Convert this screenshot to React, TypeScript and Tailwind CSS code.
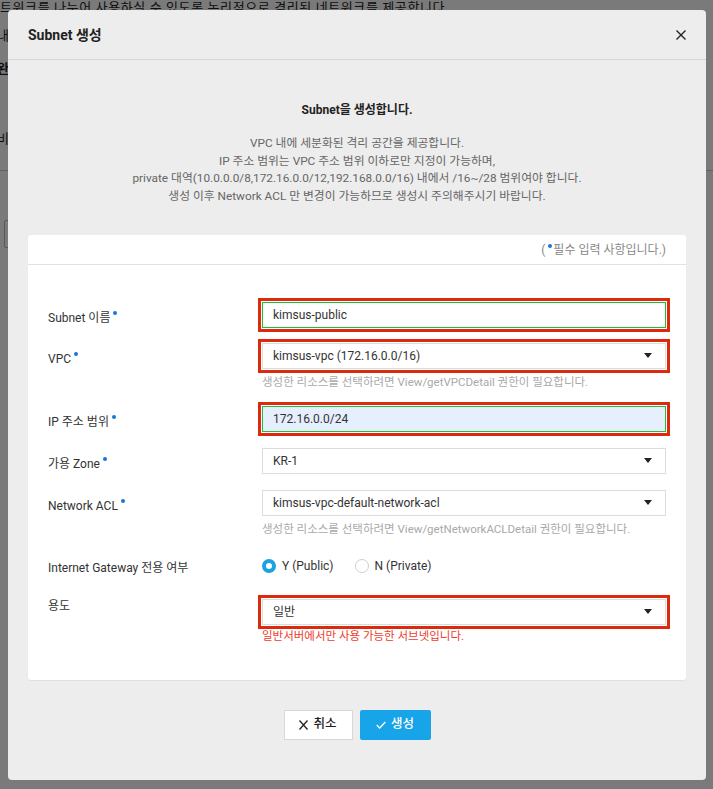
import React from 'react';

const font = "font-['Roboto','Noto_Sans_CJK_KR',sans-serif]";

const Dot = () => (
    <span className="ml-[3px] mb-[9px] inline-block h-[4px] w-[4px] rounded-full bg-[#1c74d9]" />
);

const Caret = () => (
    <svg width="8" height="5" viewBox="0 0 8 5" className="shrink-0">
        <polygon points="0,0 8,0 4,5" fill="#222" />
    </svg>
);

interface RowProps {
    label: string;
    required?: boolean;
    raised?: boolean;
    className?: string;
    children: React.ReactNode;
}

// 한 줄: 왼쪽 라벨, 오른쪽 입력 영역
const Row: React.FC<RowProps> = ({ label, required, raised, className = '', children }) => (
    <div className={`flex items-start ${className}`}>
        <div
            className={`flex w-[214px] shrink-0 items-center text-[12px] text-[#333] ${
                raised ? 'h-[14px]' : 'h-[26px] pt-[6px]'
            }`}
        >
            {label}
            {required && <Dot />}
        </div>
        <div className="w-[404px]">{children}</div>
    </div>
);

const Select: React.FC<{ value: string; marked?: boolean }> = ({ value, marked }) => (
    <div
        className={`flex h-[26px] items-center justify-between border border-[#dcdcdc] bg-white pl-[10px] pr-[13px] text-[12px] text-[#333] ${
            marked ? 'outline-[3px] outline-solid outline-[#dc2a0c] outline-offset-[1px]' : ''
        }`}
    >
        <span>{value}</span>
        <Caret />
    </div>
);

const Input: React.FC<{ value: string; filled?: boolean }> = ({ value, filled }) => (
    <div
        className={`flex h-[26px] items-center border border-[#27b83f] pl-[10px] text-[12px] text-[#333] outline-[3px] outline-solid outline-[#dc2a0c] outline-offset-[1px] ${
            filled ? 'bg-[#e6effd]' : 'bg-white'
        }`}
    >
        {value}
    </div>
);

const Hint: React.FC<{ children: React.ReactNode; red?: boolean }> = ({ children, red }) => (
    <p className={`leading-[18px] text-[11.5px] ${red ? 'mt-[2px] text-[#ee3b2c]' : 'mt-[4px] text-[#a9a9a9]'}`}>
        {children}
    </p>
);

export default function App() {
    return (
        <div className={`relative h-[789px] overflow-hidden bg-white ${font}`}>
            {/* 뒤쪽 페이지 */}
            <div className="text-[13px] leading-[18px] text-[#222]">
                <p className="-mt-[1px] whitespace-nowrap tracking-[0.6px]">트워크를 나누어 사용하실 수 있도록 논리적으로 격리된 네트워크를 제공합니다.</p>
                <p className="mt-[10px] -ml-[3px]">내</p>
                <p className="mt-[15px] -ml-[3px] font-bold underline">완</p>
                <p className="mt-[52px] -ml-[3px]">비</p>
                <div className="mt-[22px] border-t border-[#ccc]" />
                <div className="ml-[4px] mt-[49px] h-[28px] w-[40px] rounded-[2px] border border-[#bbb]" />
            </div>

            {/* 오버레이 */}
            <div className="absolute inset-0 bg-black/[0.52]" />

            {/* 모달 */}
            <div className="absolute inset-0 pl-[8px] pt-[10px]">
                <div className="w-[698px] rounded-[4px] bg-[#ededed] pb-[40px]">
                    <div className="flex h-[50px] items-center justify-between border-b border-[#d6d6d6] px-[20px]">
                        <h2 className="pt-[1px] text-[14px] font-bold text-[#222]">Subnet 생성</h2>
                        <svg width="10" height="10" viewBox="0 0 10 10">
                            <path d="M0.5 0.5 L9.5 9.5 M9.5 0.5 L0.5 9.5" stroke="#222" strokeWidth="1.4" />
                        </svg>
                    </div>

                    <div className="px-[20px] pt-[41px]">
                        <p className="text-center text-[12px] font-bold leading-[18px] text-[#222]">Subnet을 생성합니다.</p>
                        <div className="mt-[16px] text-center text-[11.8px] leading-[17.7px] text-[#666]">
                            <p>VPC 내에 세분화된 격리 공간을 제공합니다.</p>
                            <p>IP 주소 범위는 VPC 주소 범위 이하로만 지정이 가능하며,</p>
                            <p>private 대역(10.0.0.0/8,172.16.0.0/12,192.168.0.0/16) 내에서 /16~/28 범위여야 합니다.</p>
                            <p>생성 이후 Network ACL 만 변경이 가능하므로 생성시 주의해주시기 바랍니다.</p>
                        </div>

                        {/* 입력 카드 */}
                        <div className="mt-[29px] rounded-[3px] bg-white shadow-[0_1px_1px_rgba(0,0,0,0.06)]">
                            <div className="flex h-[30px] items-center justify-end border-b border-[#e2e2e2] pr-[20px] pt-[2px] text-[12px] text-[#888]">
                                (<Dot />
                                <span className="ml-[1px]">필수 입력 사항입니다.)</span>
                            </div>

                            <div className="pb-[35px] pl-[20px] pt-[37px]">
                                <Row label="Subnet 이름" required className="mb-[15px]">
                                    <Input value="kimsus-public" />
                                </Row>
                                <Row label="VPC" required className="mb-[15px]">
                                    <Select value="kimsus-vpc (172.16.0.0/16)" marked />
                                    <Hint>생성한 리소스를 선택하려면 View/getVPCDetail 권한이 필요합니다.</Hint>
                                </Row>
                                <Row label="IP 주소 범위" required className="mb-[16px]">
                                    <Input value="172.16.0.0/24" filled />
                                </Row>
                                <Row label="가용 Zone" required className="mb-[16px]">
                                    <Select value="KR-1" />
                                </Row>
                                <Row label="Network ACL" required className="mb-[14px]">
                                    <Select value="kimsus-vpc-default-network-acl" />
                                    <Hint>생성한 리소스를 선택하려면 View/getNetworkACLDetail 권한이 필요합니다.</Hint>
                                </Row>
                                <Row label="Internet Gateway 전용 여부" className="mb-[21px]">
                                    <div className="flex h-[26px] items-center pt-[2px] text-[12px] text-[#333]">
                                        <span className="h-[14px] w-[14px] rounded-full border-[4px] border-[#1ca0e6] bg-white" />
                                        <span className="ml-[6px]">Y (Public)</span>
                                        <span className="ml-[21px] h-[14px] w-[14px] rounded-full border border-[#cfcfcf] bg-white" />
                                        <span className="ml-[6px]">N (Private)</span>
                                    </div>
                                </Row>
                                <Row label="용도" raised>
                                    <Select value="일반" marked />
                                    <Hint red>일반서버에서만 사용 가능한 서브넷입니다.</Hint>
                                </Row>
                            </div>
                        </div>

                        {/* 버튼 */}
                        <div className="mt-[30px] flex justify-center gap-[7px]">
                            <button className="flex h-[30px] w-[69px] items-center justify-center gap-[5px] border border-[#d8d8d8] bg-white text-[12.5px] font-medium text-[#222]">
                                <svg width="9" height="10" viewBox="0 0 9 10">
                                    <path d="M0.5 0.5 L8.5 9.5 M8.5 0.5 L0.5 9.5" stroke="#222" strokeWidth="1.3" />
                                </svg>
                                취소
                            </button>
                            <button className="flex h-[30px] w-[71px] items-center justify-center gap-[5px] rounded-[2px] bg-[#18a4e8] text-[12.5px] font-medium text-white">
                                <svg width="10" height="8" viewBox="0 0 10 8">
                                    <path d="M0.7 4 L3.7 7 L9.3 1" stroke="#fff" strokeWidth="1.3" fill="none" />
                                </svg>
                                생성
                            </button>
                        </div>
                    </div>
                </div>
            </div>
        </div>
    );
}
